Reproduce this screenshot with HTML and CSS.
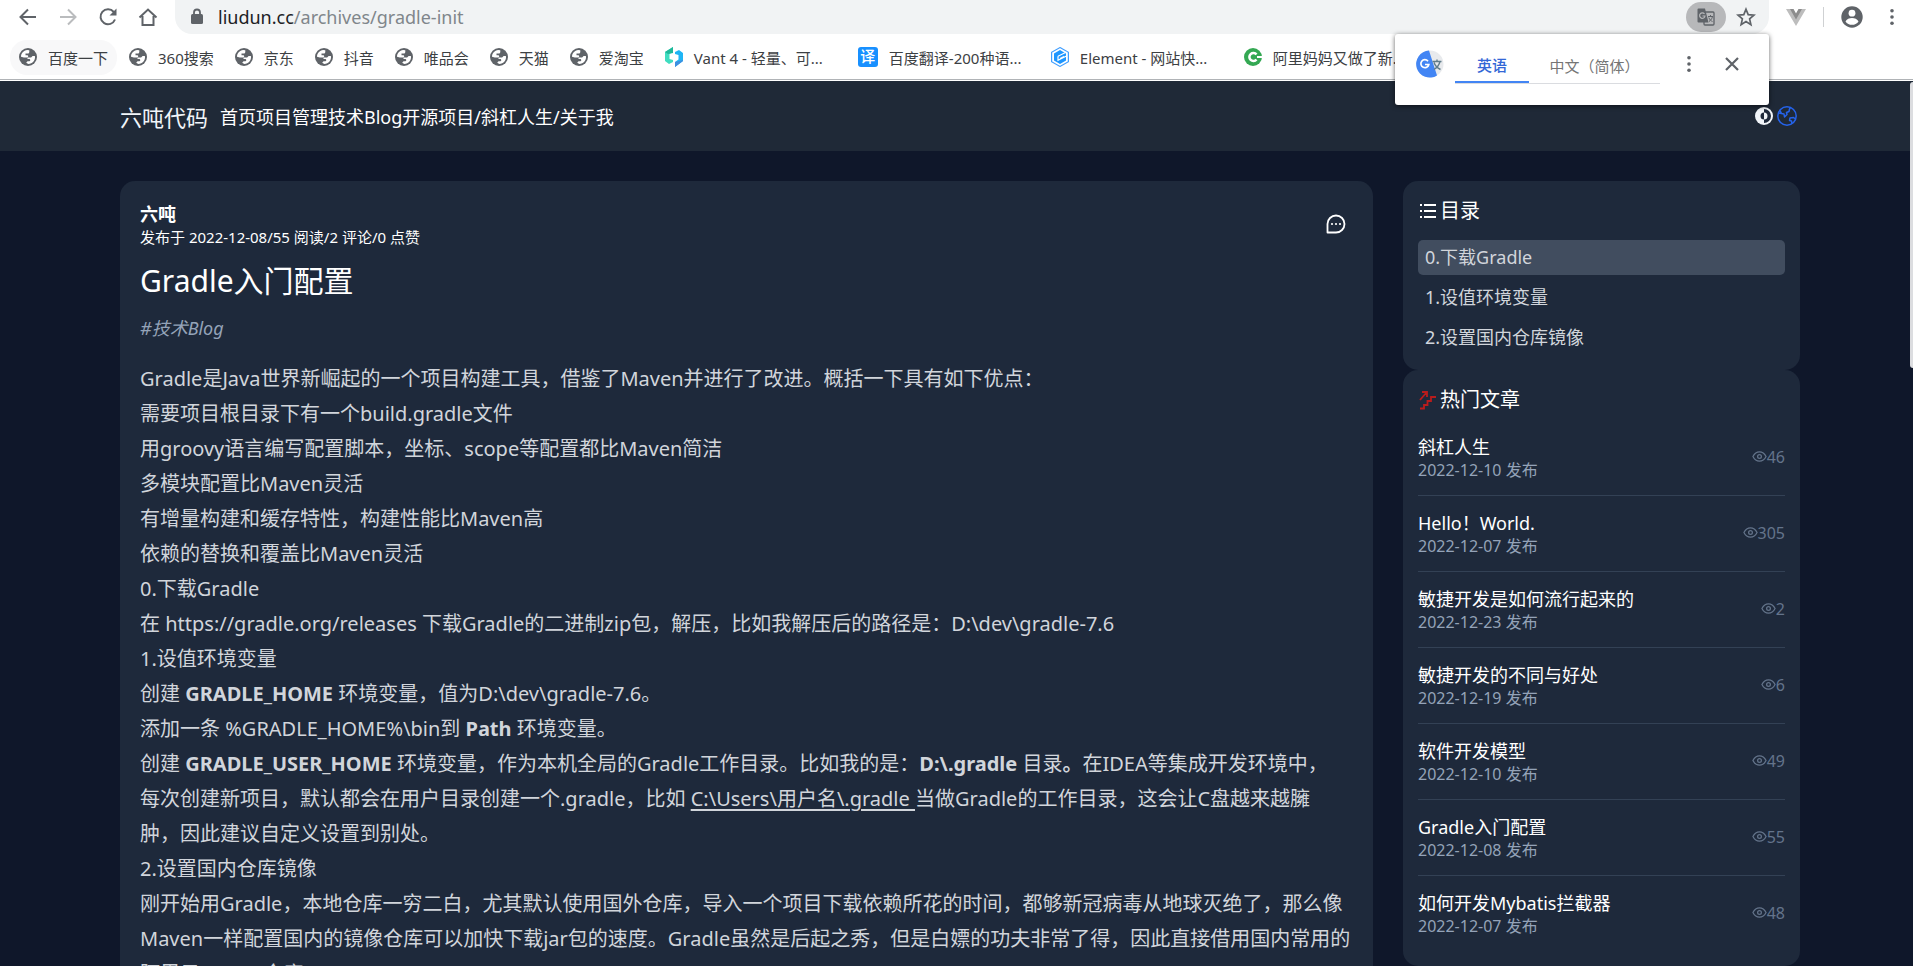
FILE: index.html
```html
<!DOCTYPE html>
<html lang="zh-CN">
<head>
<meta charset="utf-8">
<title>Gradle入门配置</title>
<link rel="stylesheet" href="styles.css">
</head>
<body>
<svg class="sprite" aria-hidden="true">
  <symbol id="world" viewBox="0 0 18 18">
    <circle cx="9" cy="9" r="9" fill="#5f6368"/>
    <path d="M8.200 2C4.600 2.400 2 5.300 2 8.700l2.800.8h3.400c1.400 0 1.400-2.200 0-2.200H6.500V5.500h2.400c.9 0 1.400-.6 1.400-1.500V2.200z" fill="#fff"/>
    <path d="M15.900 8c.8 4.200-2.300 7.800-6.600 8l-2.100-1.200 1.300-1.600h1.800c1.300 0 1.300-2.300 0-2.300H8.500V9.500h3.600l1.500-1.500z" fill="#fff"/>
  </symbol>
  <symbol id="eye" viewBox="0 0 24 24">
    <path d="M1.500 12C4 7 8 4.500 12 4.500S20 7 22.500 12C20 17 16 19.500 12 19.500S4 17 1.500 12z" fill="none" stroke="currentColor" stroke-width="2"/>
    <circle cx="12" cy="12" r="3" fill="none" stroke="currentColor" stroke-width="2"/>
  </symbol>
  <symbol id="dots" viewBox="0 0 20 20">
    <g fill="#5f6368"><circle cx="10" cy="3" r="2"/><circle cx="10" cy="10" r="2"/><circle cx="10" cy="17" r="2"/></g>
  </symbol>
</svg>

<div class="browser">
  <div class="toolbar">
    <div class="controls">
      <button class="tool" aria-label="后退"><svg width="20" height="20" viewBox="0 0 20 20" fill="none" stroke="#5f6368" stroke-width="2"><path d="M18 10H3M10 2.500 2.500 10l7.500 7.500"/></svg></button>
      <button class="tool" aria-label="前进"><svg width="20" height="20" viewBox="0 0 20 20" fill="none" stroke="#babcbe" stroke-width="2"><path d="M2 10h15M10 2.500l7.500 7.500-7.500 7.500"/></svg></button>
      <button class="tool" aria-label="刷新"><svg width="20" height="20" viewBox="0 0 20 20"><path d="M17 12.500A7.500 7.500 0 1 1 15.800 5" fill="none" stroke="#5f6368" stroke-width="2"/><path d="M18.500 1.500v7h-7z" fill="#5f6368"/></svg></button>
      <button class="tool" aria-label="主页"><svg width="20" height="20" viewBox="0 0 20 20" fill="none" stroke="#5f6368" stroke-width="2"><path d="M1.500 10.500 10 2.500l8.500 8M4.500 9v9h11V9"/></svg></button>
    </div>
    <div class="omnibox">
      <svg width="14" height="18" viewBox="0 0 14 18"><rect x="1" y="6" width="12" height="10" rx="1.500" fill="#5f6368"/><path d="M4 7V4.500a3 3 0 0 1 6 0V7" fill="none" stroke="#5f6368" stroke-width="1.800"/></svg>
      <div class="url"><span class="host">liudun.cc</span>/archives/gradle-init</div>
      <button class="translate-btn" aria-label="翻译此页"><svg width="20" height="20" viewBox="0 0 20 20"><rect x="8" y="5" width="10" height="13" rx="1" fill="none" stroke="#5f6368" stroke-width="1.300"/><path d="M2.500 1.500h6.500l3.500 14H2.500a1 1 0 0 1-1-1v-12a1 1 0 0 1 1-1z" fill="#5f6368"/><path d="M8.500 7A2.700 2.700 0 1 0 9 9H6.500" fill="none" stroke="#b7b8ba" stroke-width="1.200"/><path d="M12 9.500h5M14.500 8v1.500M16.500 9.500c-.5 2.500-2 4-3.500 5M12.800 10.500c.8 2 2 3.300 3.700 4" fill="none" stroke="#5f6368"/></svg></button>
      <button class="tool" aria-label="收藏"><svg width="20" height="20" viewBox="0 0 20 20" fill="none" stroke="#5f6368" stroke-width="1.700"><path d="M10 2.200l2.200 5.400 5.800.5-4.400 3.800 1.300 5.700L10 14.600l-4.900 3 1.300-5.700L2 8.100l5.800-.5z"/></svg></button>
    </div>
    <div class="extensions">
      <button class="tool" aria-label="Vue"><svg width="20" height="18" viewBox="0 0 20 18"><path d="M0 1h7l3 5 3-5h7L10 18z" fill="#bdbdbd"/><path d="M4 1h3.500L10 5.500 12.500 1H16L10 11.500z" fill="#8c8c8c"/></svg></button>
      <span class="rule"></span>
      <button class="tool" aria-label="用户"><svg width="22" height="22" viewBox="0 0 22 22"><circle cx="11" cy="11" r="10.700" fill="#5f6368"/><circle cx="11" cy="7.200" r="3.400" fill="#fff"/><path d="M4.500 15.500c1-2.500 4-3.500 6.500-3.500s5.500 1 6.500 3.500a8 8 0 0 1-13 0z" fill="#fff"/></svg></button>
      <button class="tool" aria-label="菜单"><svg width="18" height="18"><use href="#dots"/></svg></button>
    </div>
  </div>
  <nav class="bookmarks" aria-label="书签">
    <a class="bookmark hovered" href="#"><svg class="favicon"><use href="#world"/></svg>百度一下</a>
    <a class="bookmark" href="#"><svg class="favicon"><use href="#world"/></svg>360搜索</a>
    <a class="bookmark" href="#"><svg class="favicon"><use href="#world"/></svg>京东</a>
    <a class="bookmark" href="#"><svg class="favicon"><use href="#world"/></svg>抖音</a>
    <a class="bookmark" href="#"><svg class="favicon"><use href="#world"/></svg>唯品会</a>
    <a class="bookmark" href="#"><svg class="favicon"><use href="#world"/></svg>天猫</a>
    <a class="bookmark" href="#"><svg class="favicon"><use href="#world"/></svg>爱淘宝</a>
    <a class="bookmark long" href="#"><svg class="favicon" viewBox="0 0 18 20"><path d="M0 5 8 0v5L4.500 7v5L8 13v2l-4 2-4-3z" fill="#3fddc0"/><path d="M0 5 8 0v6L3 7z" fill="#1fb89a"/><path d="M10 5l4-2 4 3v8l-8 6v-5l3.500-2.500V8L10 7z" fill="#1fb5f5"/><path d="M10 15l8-2v1l-8 6z" fill="#3f8fe0"/></svg>Vant 4 - 轻量、可...</a>
    <a class="bookmark long" href="#"><span class="favicon-yi">译</span>百度翻译-200种语...</a>
    <a class="bookmark long" href="#"><svg class="favicon" viewBox="0 0 18 20"><path d="M9 .6 17.400 5.300v9.400L9 19.400.6 14.700V5.300z" fill="#fff" stroke="#409eff" stroke-width="1.200"/><path d="M9 3l6 3.500v7L9 17l-6-3.500v-7z" fill="#1e96ff"/><path d="M7 9.200 15.500 5M7 9.200v4L15.500 9M9 11.500l4-2" fill="none" stroke="#fff" stroke-width="1.200"/></svg>Element - 网站快...</a>
    <a class="bookmark long" href="#"><svg class="favicon" viewBox="0 0 18 18"><circle cx="9" cy="9" r="9" fill="#34a853"/><path d="M12.500 6.500a4 4 0 1 0 0 5" fill="none" stroke="#fff" stroke-width="2.500"/><path d="M13 8h5v2h-5z" fill="#fff"/></svg>阿里妈妈又做了新...</a>
  </nav>
  <div class="translate-popup" role="dialog" aria-label="翻译">
    <svg width="28" height="28" viewBox="0 0 28 28"><circle cx="14" cy="14" r="13.500" fill="#e8eaed"/><path d="M13 .6a13.500 13.500 0 1 0 8 24.800z" fill="#4285f4"/><path d="M12 11.200a4 4 0 1 0 .8 3.300H9" fill="none" stroke="#fff" stroke-width="1.700"/><path d="M16.500 11.500h9M21 9.500v2M24 11.500c-1 4-3.500 6.500-6 8M18 12.500c1 3 3.500 5.500 6.500 7" fill="none" stroke="#607d8b" stroke-width="1.400"/></svg>
    <div class="tabs">
      <button class="tab current">英语</button>
      <button class="tab">中文（简体）</button>
    </div>
    <button class="tool" aria-label="选项"><svg width="18" height="18"><use href="#dots"/></svg></button>
    <button class="tool" aria-label="关闭"><svg width="16" height="16" viewBox="0 0 16 16" stroke="#5f6368" stroke-width="2.200"><path d="M2 2l12 12M14 2 2 14"/></svg></button>
  </div>
</div>

<div class="site">
  <header class="site-header">
    <a class="brand" href="#">六吨代码</a>
    <nav class="menu"><a href="#">首页</a><a href="#">项目管理</a><a href="#">技术Blog</a><a href="#">开源项目</a>/<a href="#">斜杠人生</a>/<a href="#">关于我</a></nav>
    <div class="switches">
      <button class="tool" aria-label="切换主题"><svg width="18" height="18" viewBox="0 0 18 18"><circle cx="9" cy="9" r="9" fill="#f1f5f9"/><path d="M9 2a7 7 0 0 1 0 14v-3.500a3.500 3.500 0 0 0 0-7z" fill="#1e293b"/><path d="M9 5.500a3.500 3.500 0 0 0 0 7z" fill="#1e293b"/></svg></button>
      <button class="tool" aria-label="切换语言"><svg width="20" height="20" viewBox="0 0 20 20" fill="none" stroke="#2563eb" stroke-width="1.500" stroke-linejoin="round"><circle cx="10" cy="10" r="9.200"/><path d="M3 4.500 4.500 7.500 7 8l.5 3L10 8.500 9.500 6.500l2.500-1 .5-2.500 1-1.500M2 7l2.500.5M18.500 13l-2-1.500-3.500.5-.5 2.500 2 .5.500 2.500"/></svg></button>
    </div>
  </header>

  <main class="layout">
    <article class="card article">
      <div class="byline">
        <div>
          <div class="author">六吨</div>
          <div class="meta">发布于 2022-12-08/55 阅读/2 评论/0 点赞</div>
        </div>
        <button class="tool" aria-label="评论"><svg width="20" height="20" viewBox="0 0 20 20"><path d="M1.500 18.500V10a8.500 8.500 0 1 1 8.500 8.500z" fill="none" stroke="#fff" stroke-width="1.800" stroke-linejoin="round"/><g fill="#fff"><circle cx="6" cy="10" r="1.100"/><circle cx="10" cy="10" r="1.100"/><circle cx="14" cy="10" r="1.100"/></g></svg></button>
      </div>
      <h1 class="title">Gradle入门配置</h1>
      <a class="tag" href="#">#技术Blog</a>
      <div class="content">
        <p>Gradle是Java世界新崛起的一个项目构建工具，借鉴了Maven并进行了改进。概括一下具有如下优点：</p>
        <p>需要项目根目录下有一个build.gradle文件</p>
        <p>用groovy语言编写配置脚本，坐标、scope等配置都比Maven简洁</p>
        <p>多模块配置比Maven灵活</p>
        <p>有增量构建和缓存特性，构建性能比Maven高</p>
        <p>依赖的替换和覆盖比Maven灵活</p>
        <p>0.下载Gradle</p>
        <p>在 https://gradle.org/releases 下载Gradle的二进制zip包，解压，比如我解压后的路径是：D:\dev\gradle-7.6</p>
        <p>1.设值环境变量</p>
        <p>创建 <strong>GRADLE_HOME</strong> 环境变量，值为D:\dev\gradle-7.6。</p>
        <p>添加一条 %GRADLE_HOME%\bin到 <strong>Path</strong> 环境变量。</p>
        <p>创建 <strong>GRADLE_USER_HOME</strong> 环境变量，作为本机全局的Gradle工作目录。比如我的是：<strong>D:\.gradle</strong> 目录<strong>。</strong>在IDEA等集成开发环境中，<br>每次创建新项目，默认都会在用户目录创建一个.gradle，比如 <u>C:\Users\用户名\.gradle </u>当做Gradle的工作目录，这会让C盘越来越臃<br>肿，因此建议自定义设置到别处。</p>
        <p>2.设置国内仓库镜像</p>
        <p>刚开始用Gradle，本地仓库一穷二白，尤其默认使用国外仓库，导入一个项目下载依赖所花的时间，都够新冠病毒从地球灭绝了，那么像<br>Maven一样配置国内的镜像仓库可以加快下载jar包的速度。Gradle虽然是后起之秀，但是白嫖的功夫非常了得，因此直接借用国内常用的<br>阿里云Maven仓库</p>
      </div>
    </article>

    <aside class="sidebar">
      <section class="card panel">
        <h2 class="panel-title"><svg width="20" height="20" viewBox="0 0 20 20" stroke="#fff" stroke-width="1.800"><path d="M6 4h12M6 10h12M6 16h12M2 4h2M2 10h2M2 16h2"/></svg>目录</h2>
        <nav class="toc">
          <a class="active" href="#">0.下载Gradle</a>
          <a href="#">1.设值环境变量</a>
          <a href="#">2.设置国内仓库镜像</a>
        </nav>
      </section>
      <section class="card panel">
        <h2 class="panel-title"><svg width="20" height="20" viewBox="0 0 20 20" fill="none" stroke="#b91c1c" stroke-width="1.800"><path d="M2 10 8.500 2.500M4 2h5v5M2 18.500h4V15h3.500v-4H13V7h5"/></svg>热门文章</h2>
        <ul class="hot">
          <li><div><a href="#">斜杠人生</a><time>2022-12-10 发布</time></div><span class="views"><svg><use href="#eye"/></svg>46</span></li>
          <li><div><a href="#">Hello！World.</a><time>2022-12-07 发布</time></div><span class="views"><svg><use href="#eye"/></svg>305</span></li>
          <li><div><a href="#">敏捷开发是如何流行起来的</a><time>2022-12-23 发布</time></div><span class="views"><svg><use href="#eye"/></svg>2</span></li>
          <li><div><a href="#">敏捷开发的不同与好处</a><time>2022-12-19 发布</time></div><span class="views"><svg><use href="#eye"/></svg>6</span></li>
          <li><div><a href="#">软件开发模型</a><time>2022-12-10 发布</time></div><span class="views"><svg><use href="#eye"/></svg>49</span></li>
          <li><div><a href="#">Gradle入门配置</a><time>2022-12-08 发布</time></div><span class="views"><svg><use href="#eye"/></svg>55</span></li>
          <li><div><a href="#">如何开发Mybatis拦截器</a><time>2022-12-07 发布</time></div><span class="views"><svg><use href="#eye"/></svg>48</span></li>
        </ul>
      </section>
    </aside>
  </main>
  <div class="scroll-thumb"></div>
</div>
</body>
</html>
```
FILE: styles.css
```css
* { box-sizing: border-box; }

body {
  margin: 0;
  height: 100vh;
  overflow: hidden;
  display: flex;
  flex-direction: column;
  background: #0f172a;
  font-family: "Noto Sans", "Noto Sans CJK SC", sans-serif;
}

h1, h2, p, ul { margin: 0; padding: 0; font-weight: 400; }
ul { list-style: none; }
a { color: inherit; text-decoration: none; }
button { margin: 0; padding: 0; border: 0; background: none; font: inherit; color: inherit; }
svg { display: block; flex: none; }
.sprite { position: absolute; width: 0; height: 0; }
.tool { display: flex; }

/* Browser chrome */
.browser {
  position: relative;
  flex: none;
  background: #fff;
  border-bottom: 1px solid #fff;
  box-shadow: inset 0 -1px 0 #b0b3b6;
}
.toolbar { display: flex; height: 34px; }
.controls { display: flex; gap: 20px; width: 175px; padding-left: 18px; align-items: center; }
.omnibox {
  flex: 1;
  display: flex;
  align-items: center;
  padding: 0 13px 0 15px;
  border-radius: 0 0 17px 17px;
  background: #f1f3f4;
}
.omnibox > svg { margin: 0 14px 0 0; }
.url { flex: 1; font-size: 18px; line-height: 24px; color: #80868b; }
.host { color: #202124; }
.translate-btn {
  display: flex;
  align-items: center;
  justify-content: center;
  width: 40px;
  height: 30px;
  margin-right: 10px;
  border-radius: 15px;
  background: #b7b8ba;
}
.extensions { display: flex; align-items: center; gap: 17px; padding: 0 12px 0 17px; }
.extensions .rule { width: 1px; height: 20px; background: #cfd1d3; }
.extensions .tool:last-child { margin-left: 3px; }

.bookmarks {
  display: flex;
  align-items: center;
  gap: 3px;
  height: 46px;
  padding: 0 10px;
  white-space: nowrap;
}
.bookmark {
  display: flex;
  align-items: center;
  gap: 11px;
  height: 35px;
  padding: 0 9px;
  border-radius: 17px;
  font-size: 15px;
  color: #3c4043;
}
.bookmark.hovered { background: #f8f8f9; }
.bookmark.long { width: 190px; }
.favicon { width: 18px; height: 20px; }
.favicon-yi {
  width: 20px;
  height: 20px;
  border-radius: 3px;
  background: #1890ff;
  color: #fff;
  font-size: 15px;
  font-weight: 500;
  line-height: 19px;
  text-align: center;
}

.translate-popup {
  position: absolute;
  top: 34px;
  right: 144px;
  z-index: 2;
  display: flex;
  align-items: flex-start;
  width: 374px;
  height: 71px;
  padding: 16px 29px 0 21px;
  border-radius: 3px;
  background: #fff;
  box-shadow: 0 1px 5px rgba(0, 0, 0, 0.6);
}
.tabs { display: flex; flex: 1; margin: 0 20px 0 11px; border-bottom: 1px solid #dadce0; }
.tab { flex: 1; height: 33px; font-size: 15px; line-height: 31px; color: #757575; white-space: nowrap; }
.tab.current { flex: none; width: 74px; margin-bottom: -1px; border-bottom: 2px solid #4285f4; font-weight: 500; color: #3367d6; }
.translate-popup .tool { margin: 5px 0 0 0; }
.translate-popup .tool:last-child { margin: 6px 0 0 26px; }

/* Blog */
.site { position: relative; flex: 1; min-height: 0; color: #fff; }
.site-header {
  display: flex;
  align-items: center;
  height: 70px;
  padding: 0 116px 0 120px;
  background: #1f2937;
}
.brand { font-size: 22px; color: #f1f5f9; }
.menu { flex: 1; margin-left: 12px; font-size: 18px; }
.switches { display: flex; align-items: center; gap: 4px; }

.layout {
  display: grid;
  grid-template-columns: minmax(0, 1fr) 397px;
  gap: 30px;
  padding: 30px 113px 0 120px;
}
.card { border-radius: 15px; background: #1e293b; }
.article { padding: 20px 20px 60px; }
.byline { display: flex; justify-content: space-between; align-items: center; padding-right: 7px; }
.author { font-size: 18px; font-weight: 700; line-height: 26px; }
.meta { font-size: 15px; line-height: 20px; }
.title { margin-top: 16px; font-size: 30px; line-height: 36px; }
.tag { display: block; margin-top: 16px; font-size: 18px; line-height: 26px; font-style: italic; color: #94a3b8; }
.content { margin-top: 20px; font-size: 20px; line-height: 35px; color: #d1d5db; white-space: nowrap; }
.content u { text-underline-offset: 3px; }

.sidebar { display: flex; flex-direction: column; }
.panel { padding: 15px; }
.panel-title { display: flex; align-items: center; gap: 2px; font-size: 20px; line-height: 30px; }
.toc { display: flex; flex-direction: column; gap: 5px; margin-top: 14px; font-size: 18px; line-height: 35px; color: #d1d5db; }
.toc a { padding: 0 7px; border-radius: 5px; }
.toc .active { background: #414d5f; }
.hot { margin-top: 5px; }
.hot li { display: flex; justify-content: space-between; align-items: center; padding: 14px 0 16px; border-bottom: 1px solid #334155; }
.hot li:last-child { border-bottom: 0; }
.hot a { display: block; font-size: 18px; line-height: 27px; }
.hot time { display: block; font-size: 16px; line-height: 18px; color: #94a3b8; }
.views { display: flex; align-items: center; font-size: 16px; color: #64748b; }
.views svg { width: 15px; height: 15px; }

.scroll-thumb {
  position: absolute;
  top: 1px;
  right: 0;
  width: 3px;
  height: 286px;
  border-radius: 3px 0 0 3px;
  background: #dcdde0;
}
```
